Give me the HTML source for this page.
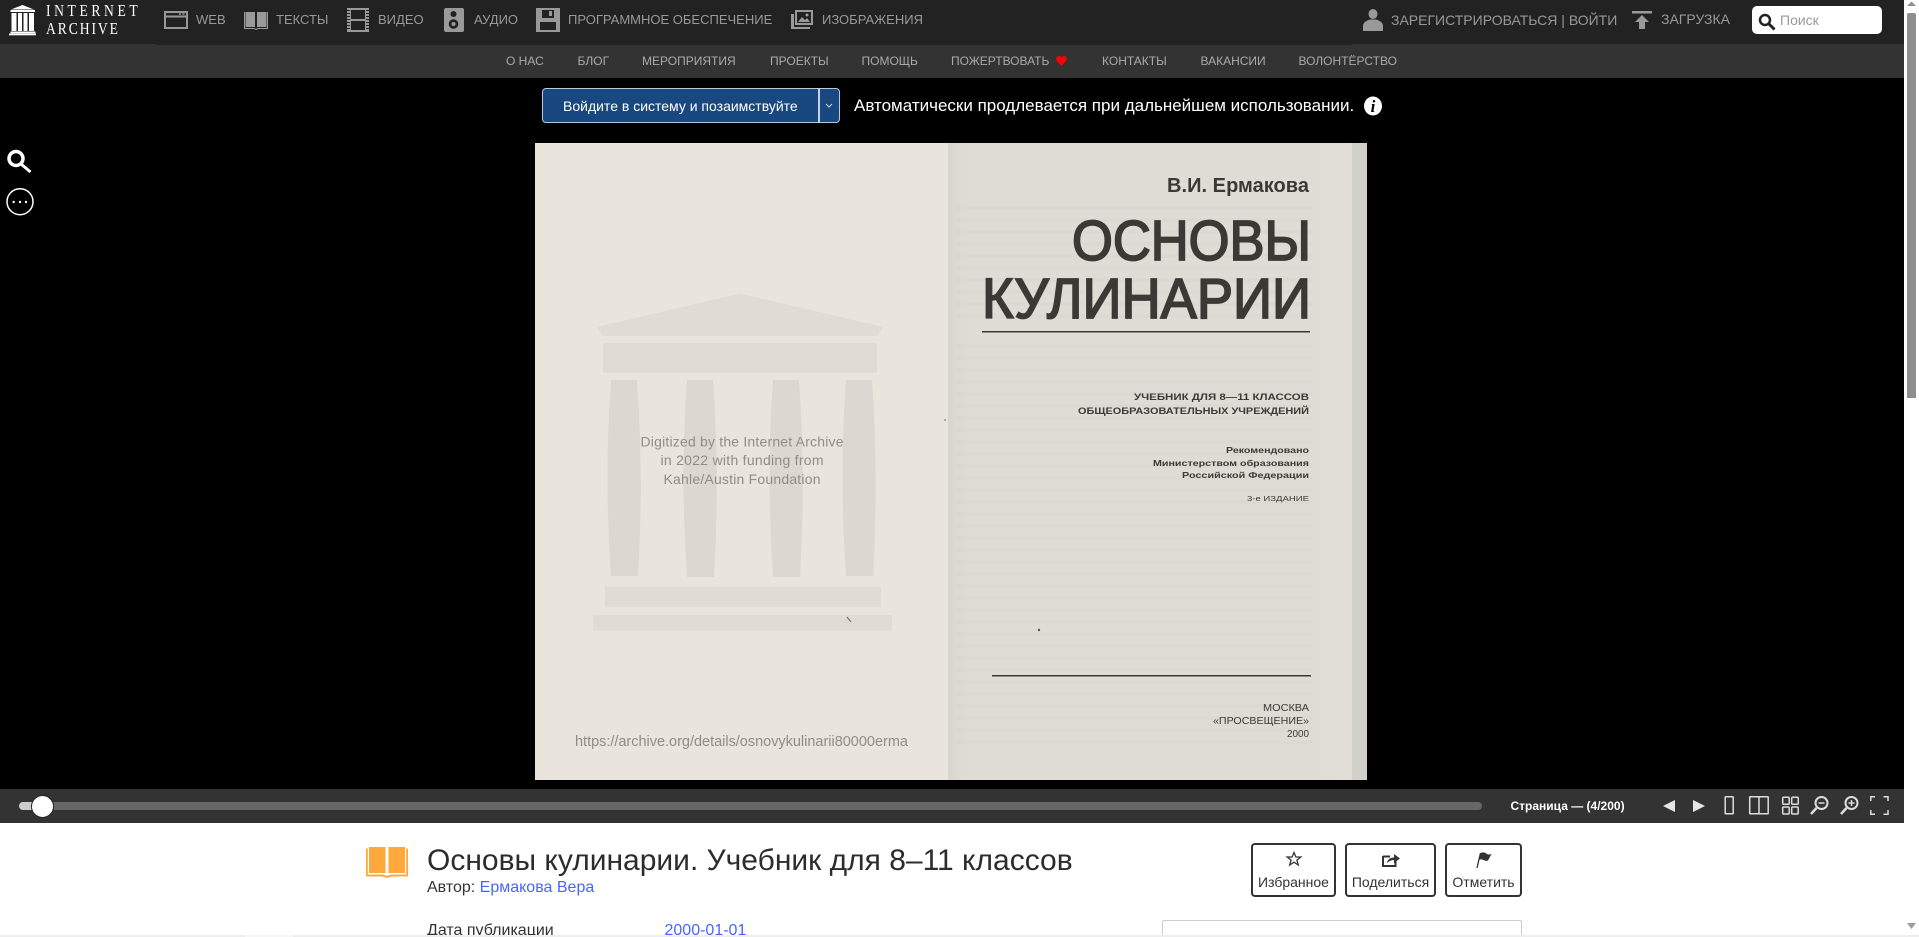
<!DOCTYPE html>
<html lang="ru">
<head>
<meta charset="utf-8">
<title>Основы кулинарии</title>
<style>
html,body{margin:0;padding:0;background:#fff;width:1919px;height:937px;overflow:hidden}
body{position:relative;font-family:"Liberation Sans",Arial,sans-serif}
.a{position:absolute}
.t{position:absolute;white-space:nowrap;line-height:20px;height:20px}
.n{color:#999;font-size:13px;top:10px}
.s{color:#aaa;font-size:12px;top:51px}
svg{position:absolute;overflow:visible}
.btn{position:absolute;top:843px;height:54px;box-sizing:border-box;border:2px solid #333;border-radius:4px;background:#fff}
.btn span{position:absolute;left:0;right:0;top:27px;text-align:center;font-size:14px;line-height:20px;color:#333;white-space:nowrap}
</style>
</head>
<body>
<div class="a" style="left:0;top:0;width:1904px;height:45px;background:#222"></div>
<div class="a" style="left:0;top:44px;width:156px;height:1px;background:#333"></div>
<div class="a" style="left:1352px;top:44px;width:552px;height:1px;background:#333"></div>
<div class="a" style="left:0;top:45px;width:1904px;height:33px;background:#333"></div>
<div class="a" style="left:0;top:78px;width:1904px;height:711px;background:#000"></div>
<div class="a" style="left:0;top:789px;width:1904px;height:34px;background:#333"></div>

<!-- logo -->
<svg style="left:0;top:0" width="60" height="44" fill="#fff">
<path d="M22.5 5 L34 9.5 H11 Z"/>
<rect x="10.5" y="10" width="24.5" height="2"/>
<rect x="11.5" y="13" width="5" height="18"/><rect x="18" y="13" width="4" height="18"/><rect x="23.5" y="13" width="4" height="18"/><rect x="29" y="13" width="5" height="18"/>
<rect x="10.5" y="31.5" width="25" height="1.8"/><rect x="9" y="33.5" width="27" height="1.8"/>
</svg>
<div class="t" style="left:46px;top:1px;font-family:'Liberation Serif',serif;font-size:17px;letter-spacing:4.500px;color:#fff;transform:scaleX(.8);transform-origin:0 0">INTERNET</div>
<div class="t" style="left:46px;top:18.500px;font-family:'Liberation Serif',serif;font-size:17px;letter-spacing:2.400px;color:#fff;transform:scaleX(.8);transform-origin:0 0">ARCHIVE</div>

<!-- nav icons -->
<svg style="left:164px;top:11px" width="24" height="18" fill="none" stroke="#999" stroke-width="2"><rect x="1" y="1" width="22" height="16"/><path d="M1 5.5H23" stroke-width="2"/><path d="M15 3H17M18.5 3H20.5" stroke-width="1.5"/></svg>
<div class="t n" style="left:196px">WEB</div>
<svg style="left:244px;top:10px" width="24" height="20" fill="#999"><path d="M1.500 2H11V17H1.500Z M13 2H22.500V17H13Z"/><path d="M0.500 2V18.500H10L12 19.500L14 18.500H23.500V2" fill="none" stroke="#999"/></svg>
<div class="t n" style="left:276px">ТЕКСТЫ</div>
<svg style="left:346px;top:8px" width="24" height="24"><path d="M1 0H23V24H1Z" fill="#999"/><rect x="5" y="2" width="14" height="9" fill="#222"/><rect x="5" y="13" width="14" height="9" fill="#222"/><path d="M1 2.500H4M1 5.500H4M1 8.500H4M1 11.500H4M1 14.500H4M1 17.500H4M1 20.500H4M20 2.500H23M20 5.500H23M20 8.500H23M20 11.500H23M20 14.500H23M20 17.500H23M20 20.500H23" stroke="#222" stroke-width="1"/></svg>
<div class="t n" style="left:378px">ВИДЕО</div>
<svg style="left:444px;top:8px" width="20" height="24"><rect width="20" height="24" rx="2" fill="#999"/><circle cx="9.500" cy="6" r="3" fill="#222"/><circle cx="9.500" cy="16" r="4.800" fill="#222"/><circle cx="9.500" cy="16" r="2" fill="#999"/></svg>
<div class="t n" style="left:474px">АУДИО</div>
<svg style="left:536px;top:8px" width="24" height="24"><path d="M0 0H24V24H0Z" fill="#999"/><rect x="6" y="2" width="12" height="8" fill="#222"/><rect x="13" y="3" width="3" height="5" fill="#999"/><rect x="4" y="14" width="16" height="8" fill="#222"/></svg>
<div class="t n" style="left:568px">ПРОГРАММНОЕ ОБЕСПЕЧЕНИЕ</div>
<svg style="left:790px;top:9px" width="24" height="21"><path d="M1 5H4V18H20V20H1Z" fill="#999"/><rect x="5" y="1" width="18" height="15" fill="#999"/><rect x="7" y="3" width="14" height="11" fill="#222"/><path d="M8 13L12 8L15 11L17 9L20 13Z" fill="#999"/><circle cx="17" cy="6" r="1.500" fill="#999"/></svg>
<div class="t n" style="left:822px">ИЗОБРАЖЕНИЯ</div>

<svg style="left:1363px;top:9px" width="20" height="22" fill="#999"><ellipse cx="10" cy="5" rx="4.500" ry="5"/><path d="M0 22V17C0 13 4 11.500 7 10.500H13C16 11.500 20 13 20 17V22Z"/></svg>
<div class="t n" style="left:1391px;font-size:14px">ЗАРЕГИСТРИРОВАТЬСЯ | ВОЙТИ</div>
<svg style="left:1632px;top:11px" width="20" height="18" fill="#999"><rect width="20" height="2.500"/><path d="M10 4L17 11H13V18H7V11H3Z"/></svg>
<div class="t n" style="left:1661px;top:9px;font-size:14px">ЗАГРУЗКА</div>
<div class="a" style="left:1752px;top:6px;width:130px;height:28px;background:#fff;border-radius:5px"></div>
<svg style="left:1758px;top:13px" width="19" height="18" fill="none" stroke="#222"><circle cx="7" cy="7" r="5" stroke-width="2.500"/><path d="M10.500 10.500L16.500 16.500" stroke-width="3"/></svg>
<div class="t" style="left:1780px;top:10px;font-size:14px;color:#999">Поиск</div>

<!-- subnav -->
<div class="t s" style="left:506px">О НАС</div>
<div class="t s" style="left:577.500px">БЛОГ</div>
<div class="t s" style="left:642px">МЕРОПРИЯТИЯ</div>
<div class="t s" style="left:770px">ПРОЕКТЫ</div>
<div class="t s" style="left:861.500px">ПОМОЩЬ</div>
<div class="t s" style="left:951px">ПОЖЕРТВОВАТЬ</div>
<svg style="left:1056px;top:56px" width="11" height="10" fill="#f00"><path d="M5.500 10L.5 4.500C-.5 1.500 1.500 0 3 0C4.500 0 5 1 5.500 1.500C6 1 6.500 0 8 0C9.500 0 11.500 1.500 10.500 4.500Z"/></svg>
<div class="t s" style="left:1102px">КОНТАКТЫ</div>
<div class="t s" style="left:1200.500px">ВАКАНСИИ</div>
<div class="t s" style="left:1298.500px">ВОЛОНТЁРСТВО</div>

<!-- borrow bar -->
<div class="a" style="left:542px;top:88px;width:298px;height:35px;box-sizing:border-box;background:#194880;border:1px solid #b9c7d8;border-radius:4px"></div>
<div class="a" style="left:818px;top:88px;width:2px;height:35px;background:#c6d2e0"></div>
<svg style="left:825px;top:103px" width="8" height="6" fill="none" stroke="#d5deea" stroke-width="1"><path d="M1 1L4 4L7 1"/></svg>
<div class="t" style="left:563px;top:95.500px;font-size:14px;color:#fff">Войдите в систему и позаимствуйте</div>
<div class="t" style="left:854px;top:95.500px;font-size:17px;color:#fff">Автоматически продлевается при дальнейшем использовании.</div>
<svg style="left:1364px;top:96px" width="18" height="20"><ellipse cx="9" cy="10" rx="9" ry="9.500" fill="#fff"/><text x="9" y="16" text-anchor="middle" font-family="Liberation Serif,serif" font-style="italic" font-weight="bold" font-size="17" fill="#000">i</text></svg>

<!-- side icons -->
<svg style="left:0;top:140px" width="40" height="90" fill="none" stroke="#fff">
<circle cx="16" cy="18.500" r="7" stroke-width="3.500"/><path d="M21 24L30.500 32" stroke-width="3"/>
<circle cx="20" cy="61.700" r="13" stroke-width="1.500"/>
<circle cx="13.700" cy="62" r="1.200" fill="#fff" stroke="none"/><circle cx="20" cy="62" r="1.200" fill="#fff" stroke="none"/><circle cx="26" cy="62" r="1.200" fill="#fff" stroke="none"/>
</svg>

<!-- book -->
<svg style="left:0;top:0" width="1919" height="937">
<defs>
<linearGradient id="rp" x1="0" x2="1" y1="0" y2="0"><stop offset="0" stop-color="#d9d6cf"/><stop offset=".04" stop-color="#dfdcd5"/><stop offset=".9" stop-color="#dfdcd5"/><stop offset="1" stop-color="#e1ded8"/></linearGradient>
</defs>
<rect x="535" y="143" width="413" height="637" fill="#e9e4dc"/>
<rect x="948" y="143" width="404" height="637" fill="url(#rp)"/>
<rect x="1352" y="143" width="15" height="637" fill="#d2d0cb"/>
<g fill="#e0dcd4">
<path d="M740 293.500L883 327L877 336H603L597 327Z"/>
<rect x="603" y="343" width="274" height="30"/>
<rect x="605" y="586.500" width="276" height="20.500"/>
<rect x="593" y="615" width="299" height="15.500"/>
</g>
<g fill="#dcd8d1">
<path d="M611 380H637Q644 478 638 576H611Q604 478 611 380Z"/>
<path d="M687 380H713Q720 478 714 577H687Q680 478 687 380Z"/>
<path d="M773 380H799Q806 478 800 577H773Q766 478 773 380Z"/>
<path d="M846 380H872Q879 478 873 576H846Q839 478 846 380Z"/>
</g>
<g font-family="Liberation Sans,sans-serif" fill="#8f8d89" font-size="14" text-anchor="middle">
<text x="742" y="446.500" textLength="203">Digitized by the Internet Archive</text>
<text x="742" y="465" textLength="163">in 2022 with funding from</text>
<text x="742" y="484" textLength="157">Kahle/Austin Foundation</text>
</g>
<text x="575" y="746" font-family="Liberation Sans,sans-serif" fill="#8f8d89" font-size="14.500" textLength="333">https://archive.org/details/osnovykulinarii80000erma</text>
<path d="M847 617L851 622" stroke="#77736c" stroke-width="1.200"/>
<circle cx="945" cy="420" r="1" fill="#999"/>
<circle cx="1039" cy="630" r="1.200" fill="#55524e"/>
<!-- show-through lines -->
<g fill="#8a8780" opacity=".03">
<rect x="957" y="206" width="356" height="4"/><rect x="957" y="218" width="356" height="4"/><rect x="957" y="230" width="356" height="4"/><rect x="957" y="242" width="356" height="4"/><rect x="957" y="254" width="356" height="4"/><rect x="957" y="266" width="356" height="4"/><rect x="957" y="278" width="356" height="4"/><rect x="957" y="290" width="356" height="4"/><rect x="957" y="302" width="356" height="4"/><rect x="957" y="314" width="356" height="4"/>
<rect x="957" y="344" width="356" height="4"/><rect x="957" y="356" width="356" height="4"/><rect x="957" y="368" width="356" height="4"/><rect x="957" y="380" width="356" height="4"/><rect x="957" y="392" width="356" height="4"/><rect x="957" y="404" width="356" height="4"/><rect x="957" y="416" width="356" height="4"/><rect x="957" y="428" width="356" height="4"/><rect x="957" y="440" width="356" height="4"/><rect x="957" y="452" width="356" height="4"/><rect x="957" y="464" width="356" height="4"/><rect x="957" y="476" width="356" height="4"/><rect x="957" y="488" width="356" height="4"/><rect x="957" y="500" width="356" height="4"/><rect x="957" y="512" width="356" height="4"/><rect x="957" y="524" width="356" height="4"/><rect x="957" y="536" width="356" height="4"/><rect x="957" y="548" width="356" height="4"/><rect x="957" y="560" width="356" height="4"/><rect x="957" y="572" width="356" height="4"/><rect x="957" y="584" width="356" height="4"/><rect x="957" y="596" width="356" height="4"/><rect x="957" y="608" width="356" height="4"/><rect x="957" y="620" width="356" height="4"/><rect x="957" y="632" width="356" height="4"/><rect x="957" y="644" width="356" height="4"/><rect x="957" y="656" width="356" height="4"/><rect x="957" y="668" width="356" height="4"/><rect x="957" y="680" width="356" height="4"/><rect x="957" y="692" width="356" height="4"/><rect x="957" y="704" width="356" height="4"/><rect x="957" y="716" width="356" height="4"/><rect x="957" y="728" width="356" height="4"/><rect x="957" y="740" width="356" height="4"/>
</g>
<g font-family="Liberation Sans,sans-serif" fill="#3b3936" text-anchor="end">
<text x="1309" y="192" font-size="20" font-weight="bold" textLength="142">В.И. Ермакова</text>
<text x="1311" y="260" font-size="57" stroke="#3b3936" stroke-width="1.800" textLength="239" lengthAdjust="spacingAndGlyphs">ОСНОВЫ</text>
<text x="1311" y="318" font-size="57" stroke="#3b3936" stroke-width="1.800" textLength="329" lengthAdjust="spacingAndGlyphs">КУЛИНАРИИ</text>
<text x="1309" y="400" font-size="9" font-weight="bold" textLength="175" lengthAdjust="spacingAndGlyphs">УЧЕБНИК ДЛЯ 8—11 КЛАССОВ</text>
<text x="1309" y="414" font-size="9" font-weight="bold" textLength="231" lengthAdjust="spacingAndGlyphs">ОБЩЕОБРАЗОВАТЕЛЬНЫХ УЧРЕЖДЕНИЙ</text>
<text x="1309" y="453" font-size="8.500" font-weight="bold" textLength="83" lengthAdjust="spacingAndGlyphs">Рекомендовано</text>
<text x="1309" y="466" font-size="8.500" font-weight="bold" textLength="156" lengthAdjust="spacingAndGlyphs">Министерством образования</text>
<text x="1309" y="478" font-size="8.500" font-weight="bold" textLength="127" lengthAdjust="spacingAndGlyphs">Российской Федерации</text>
<text x="1309" y="501" font-size="7.500" textLength="62" lengthAdjust="spacingAndGlyphs">3-е ИЗДАНИЕ</text>
<text x="1309" y="711" font-size="10" textLength="46" lengthAdjust="spacingAndGlyphs">МОСКВА</text>
<text x="1309" y="724" font-size="10" textLength="96" lengthAdjust="spacingAndGlyphs">«ПРОСВЕЩЕНИЕ»</text>
<text x="1309" y="737" font-size="10" textLength="22" lengthAdjust="spacingAndGlyphs">2000</text>
</g>
<rect x="982" y="331" width="328" height="1.500" fill="#3b3936"/>
<rect x="992" y="675" width="319" height="1.500" fill="#3b3936"/>
</svg>

<!-- slider -->
<div class="a" style="left:19px;top:802px;width:1463px;height:8px;background:#666;border-radius:4px"></div>
<div class="a" style="left:19px;top:802px;width:23px;height:8px;background:#ccc;border-radius:4px 0 0 4px"></div>
<div class="a" style="left:30.500px;top:795px;width:23px;height:23px;box-sizing:border-box;background:#fff;border:1px solid #222;border-radius:50%"></div>
<div class="t" style="left:1510.500px;top:796px;font-size:12px;font-weight:bold;color:#fff">Страница — (4/200)</div>

<!-- toolbar icons -->
<svg style="left:1660px;top:790px" width="235" height="30">
<path d="M15 10V22L3 16Z" fill="#e6e6e6"/><path d="M33 10L45 16L33 22Z" fill="#e6e6e6"/>
<g fill="none" stroke="#ddd" stroke-width="1.500">
<rect x="65.200" y="6.700" width="8" height="17" rx=".5"/>
<rect x="89.700" y="6.700" width="18.500" height="17" rx=".5"/><path d="M99 7V24"/>
<rect x="122.700" y="7.200" width="6.500" height="7" rx="1"/><rect x="131.700" y="7.200" width="6.500" height="7" rx="1"/><rect x="122.700" y="17" width="6.500" height="7" rx="1"/><rect x="131.700" y="17" width="6.500" height="7" rx="1"/>
<circle cx="161.500" cy="13" r="6" stroke-width="2"/><path d="M156.500 18L151 24" stroke-width="2.500"/><path d="M158.500 13H164.500" stroke-width="1.500"/>
<circle cx="191.500" cy="13" r="6" stroke-width="2"/><path d="M186.500 18L181 24" stroke-width="2.500"/><path d="M188.500 13H194.500M191.500 10V16" stroke-width="1.500"/>
<path d="M210.800 11V6.800H215M223.500 6.800H228V11M228 20V24.300H223.500M215 24.300H210.800V20"/>
</g>
</svg>

<!-- details -->
<svg style="left:366px;top:847px" width="42" height="31" fill="#ffa93c"><path d="M3 0H19.500V26H3Z M22.500 0H39V26H22.500Z"/><path d="M0 1.500H1.800V27.500H17L21 29L25 27.500H40.200V1.500H42V29.500H26L21 31L16 29.500H0Z"/></svg>
<div class="t" style="left:427px;top:846px;height:30px;line-height:30px;font-size:30px;color:#2c2c2c">Основы кулинарии. Учебник для 8–11 классов</div>
<div class="t" style="left:427px;top:878px;font-size:16px;color:#333">Автор: <span style="color:#4b64ff">Ермакова Вера</span></div>
<div class="t" style="left:427px;top:921px;font-size:16px;color:#333">Дата публикации</div>
<div class="t" style="left:664.500px;top:921px;font-size:16px;color:#4b64ff">2000-01-01</div>

<div class="btn" style="left:1251px;width:85px"><span>Избранное</span></div>
<div class="btn" style="left:1345px;width:91px"><span>Поделиться</span></div>
<div class="btn" style="left:1445px;width:77px"><span>Отметить</span></div>
<svg style="left:1286px;top:851px" width="16" height="16" fill="none" stroke="#333" stroke-width="1.300"><path d="M8 1.500L9.900 6H14.800L10.900 9.100L12.300 14L8 11.200L3.700 14L5.100 9.100L1.200 6H6.100Z"/></svg>
<svg style="left:1382px;top:853px" width="18" height="14"><path d="M1 3.500H8M1 3V13H13.500V8" fill="none" stroke="#333" stroke-width="2"/><path d="M5 10C5.500 6.500 8 4.500 12 4.500V1L18 5.500L12 10V7C9.500 7 7 8 5 10Z" fill="#333"/></svg>
<svg style="left:1476px;top:851px" width="17" height="18"><path d="M1 17L4.500 2" stroke="#333" stroke-width="1.300"/><path d="M4.500 2C7 1 8.500 1 11 3C12.500 3.700 14 3.500 15.500 3L12 9.500C9.500 10.500 8 9 6 8.500C4.500 8.200 3.500 8.500 3 9Z" fill="#333"/></svg>
<div class="a" style="left:1162px;top:920px;width:360px;height:20px;box-sizing:border-box;border:1px solid #ccc;border-radius:2px;background:#fff"></div>

<!-- scrollbars -->
<div class="a" style="left:1904px;top:0;width:15px;height:937px;background:#fff"></div>
<svg style="left:1904px;top:0" width="15" height="937" fill="#8f8f8f"><path d="M3 6L7.500 1.500L12 6Z"/><path d="M3 923H12L7.500 929Z" fill="#9b9b9b"/><path d="M3 15Q3 13 5 13H10Q12 13 12 15V398H3Z"/></svg>
<div class="a" style="left:0;top:935px;width:1919px;height:2px;background:#eee"></div>
<div class="a" style="left:245px;top:935px;width:48px;height:2px;background:#f6f6f6"></div>
</body>
</html>
